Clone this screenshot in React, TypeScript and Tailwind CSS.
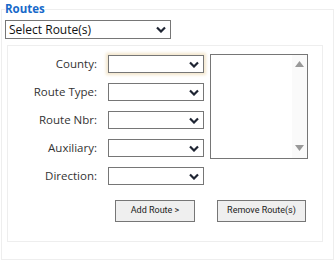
import React from 'react';

const FIELDS = ['County:', 'Route Type:', 'Route Nbr:', 'Auxiliary:', 'Direction:'];

function Chevron() {
  return (
    <svg width="10" height="7" viewBox="0 0 10 7" className="shrink-0">
      <path d="M1 1.5 L5 5.5 L9 1.5" fill="none" stroke="#1f2533" strokeWidth="2.2" />
    </svg>
  );
}

function DropDown({ focused, text, className }: { focused?: boolean; text?: string; className?: string }) {
  return (
    <div
      className={`flex items-center justify-between border border-[#767676] bg-white pl-[3px] pr-[4px] ${className ?? ''} ${
        focused ? 'shadow-[0_0_3px_2px_#f3e6cc]' : ''
      }`}
    >
      <span className="text-[12px] leading-none text-[#111]">{text}</span>
      <Chevron />
    </div>
  );
}

export default function App() {
  return (
    <div className="w-[336px] h-[265px] bg-white font-['Open_Sans',sans-serif] text-[#333]">
      <fieldset className="ml-[1px] mr-[2px] mt-[1px] h-[259px] border border-[#eeeeee] pl-[3px] pr-[4px]">
        <legend className="px-0 text-[11.5px] font-bold leading-[16px] text-[#1769c9]">Routes</legend>
        <DropDown text="Select Route(s)" className="mt-[3px] h-[19px] w-[166px]" />

        <div className="ml-[2px] mt-[6px] h-[197px] w-[316px] border border-[#eeeeee]">
          <div className="flex pt-[8px]">
            <div className="flex flex-col gap-[10px] pt-[1px]">
              {FIELDS.map((f, i) => (
                <div key={f} className="flex items-center">
                  <span className="w-[89px] text-right text-[11.5px] leading-none">{f}</span>
                  <DropDown focused={i === 0} className="ml-[11px] h-[18px] w-[96px]" />
                </div>
              ))}
            </div>
            <div className="ml-[6px] flex h-[105px] w-[98px] border border-[#767676] bg-white">
              <div className="flex-1" />
              <div className="flex w-[15px] flex-col items-center justify-between bg-[#fafafa] pt-[6px] pb-[7px]">
                <svg width="9" height="6" viewBox="0 0 9 6">
                  <path d="M0 6 L4.5 0 L9 6 Z" fill="#999999" />
                </svg>
                <svg width="9" height="6" viewBox="0 0 9 6">
                  <path d="M0 0 L4.5 6 L9 0 Z" fill="#999999" />
                </svg>
              </div>
            </div>
          </div>

          <div className="mt-[15px] flex pl-[107px] font-['Roboto',sans-serif]">
            <button className="h-[22px] w-[80px] border border-[#767676] bg-[#efefef] text-[9px] text-[#222]">
              Add Route &gt;
            </button>
            <button className="ml-[22px] h-[22px] w-[89px] border border-[#767676] bg-[#efefef] text-[9px] text-[#222]">
              Remove Route(s)
            </button>
          </div>
        </div>
      </fieldset>
    </div>
  );
}
